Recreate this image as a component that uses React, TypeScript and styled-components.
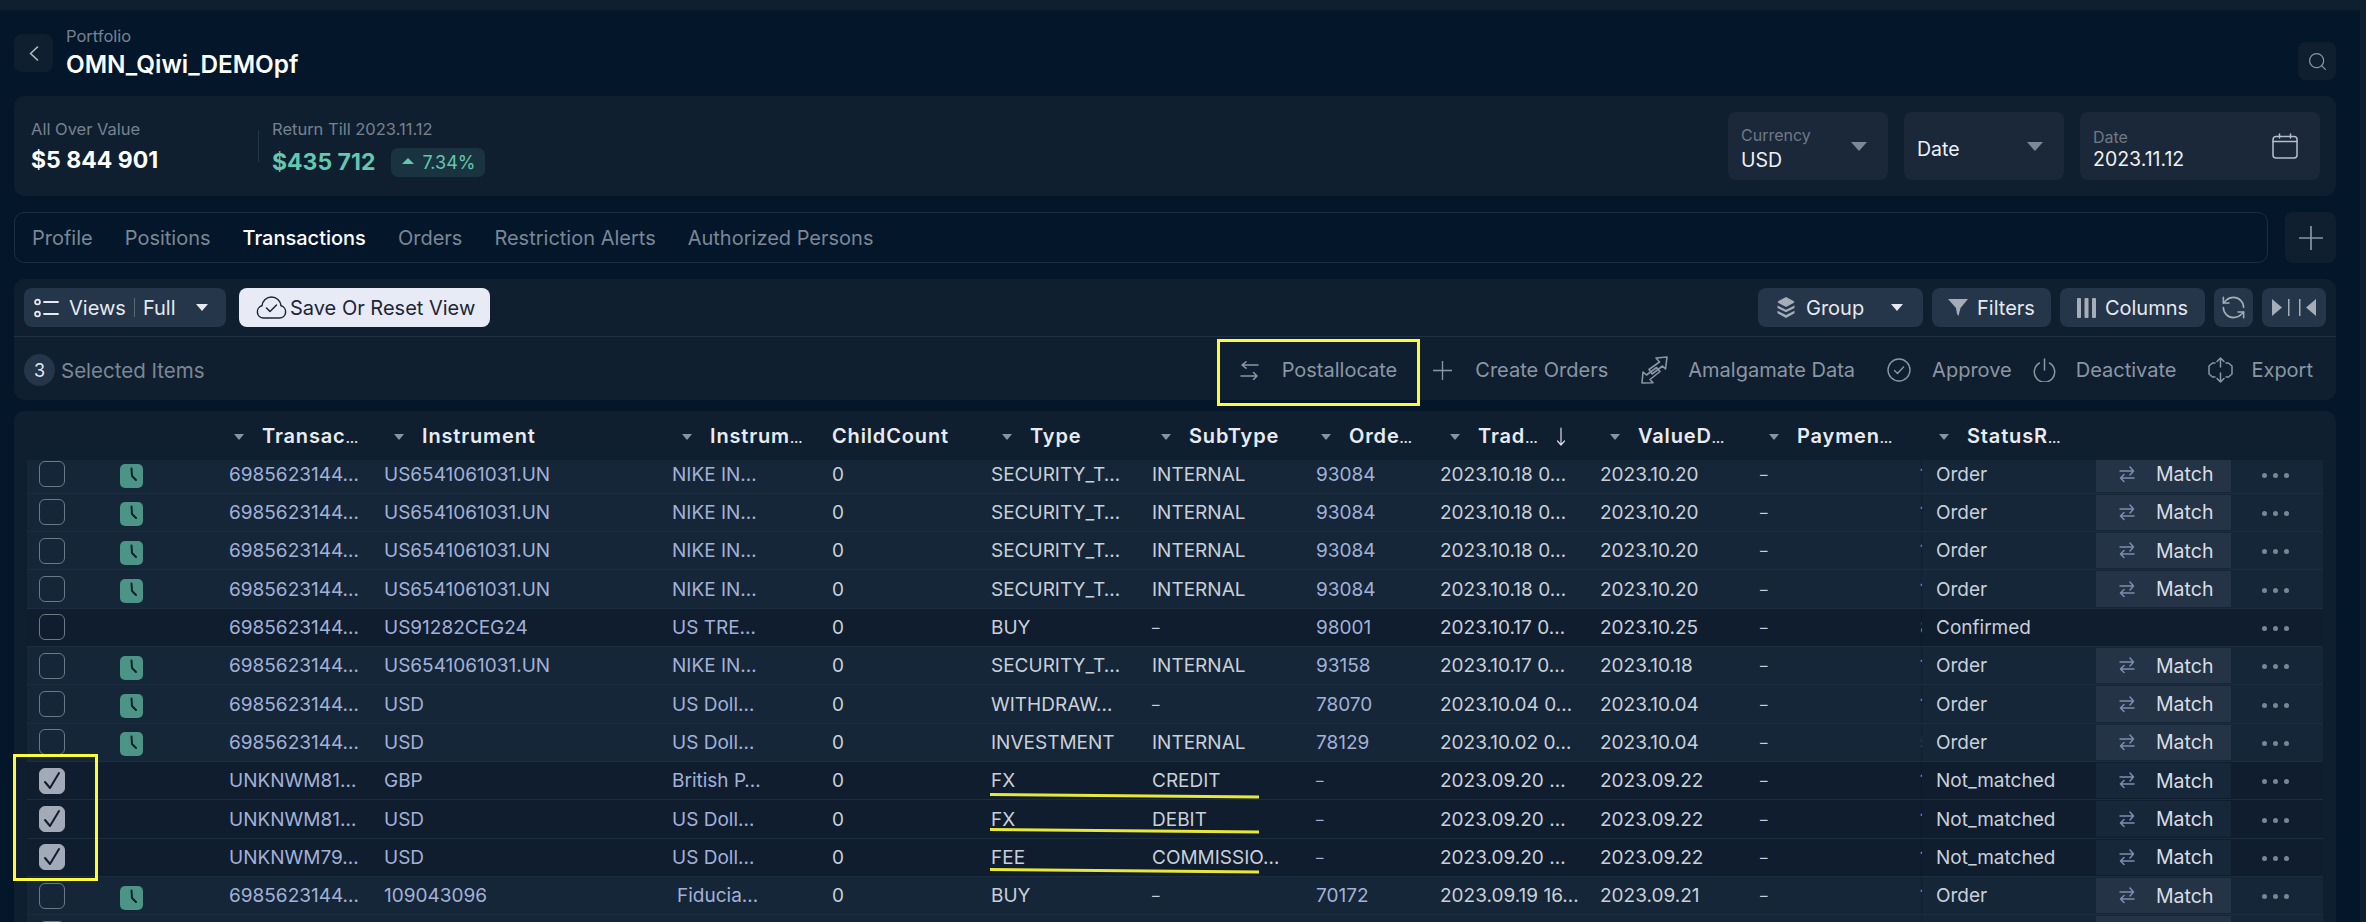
import React from 'react';
import styled, { createGlobalStyle } from 'styled-components';
import { RefreshCcw, Search } from 'lucide-react';

const Global = createGlobalStyle`
  html, body { margin: 0; padding: 0; background: #101f30; }
  body { font-family: Inter, "Noto Sans", sans-serif; overflow: hidden; }
  * { box-sizing: border-box; }
`;

const Page = styled.div`
  position: relative;
  width: 2366px;
  height: 922px;
  display: flex;
  overflow: hidden;
  background: #101f30;
`;
const Main = styled.div`
  width: 2360px;
  display: flex;
  flex-direction: column;
  background: #03162a;
`;
const TopBar = styled.div`
  height: 10px;
  flex: none;
  background: #101f30;
`;
const Content = styled.div`
  flex: 1;
  min-height: 0;
  display: flex;
  flex-direction: column;
  padding: 0 24px 0 14px;
`;
const HeaderRow = styled.header`
  height: 86px;
  flex: none;
  display: flex;
  align-items: center;
  gap: 13px;
`;
const SquareButton = styled.button<{ $w: number; $h: number }>`
  width: ${p => p.$w}px;
  height: ${p => p.$h}px;
  flex: none;
  padding: 0;
  border: 0;
  border-radius: 8px;
  background: #101f30;
  color: #8a95a3;
  display: flex;
  align-items: center;
  justify-content: center;
`;
const SearchButton = styled(SquareButton)`
  margin: 16px 0 0 auto;
`;
const TitleBlock = styled.div`
  display: flex;
  flex-direction: column;
  margin-top: -2px;
`;
const Eyebrow = styled.span`
  font-size: 16.5px;
  line-height: 20px;
  color: #76828f;
`;
const Title = styled.h1`
  margin: 4px 0 0;
  font-size: 24.3px;
  line-height: 28px;
  font-weight: 600;
  color: #fff;
`;
const SummaryCard = styled.section`
  height: 100px;
  flex: none;
  display: flex;
  align-items: center;
  padding: 0 16px 0 17px;
  border-radius: 10px;
  background: #101f30;
`;
const Stat = styled.div`
  display: flex;
  flex-direction: column;
`;
const StatLabel = styled.span`
  font-size: 16.5px;
  line-height: 20px;
  color: #76828f;
`;
const StatValue = styled.strong<{ $accent?: boolean }>`
  font-size: 23px;
  line-height: 30px;
  font-weight: 700;
  color: ${p => (p.$accent ? '#62c8af' : '#fff')};
`;
const OverValue = styled(StatValue)`
  margin-top: 6px;
`;
const StatRow = styled.div`
  display: flex;
  align-items: center;
  gap: 16px;
  margin-top: 8px;
`;
const FirstStat = styled(Stat)`
  width: 227px;
  margin-top: 2px;
`;
const StatDivider = styled.div`
  width: 1px;
  height: 32px;
  margin-right: 13px;
  background: #24364a;
`;
const ReturnStat = styled(Stat)`
  margin-top: 4px;
`;
const Badge = styled.span`
  height: 29px;
  width: 94px;
  display: flex;
  align-items: center;
  gap: 8px;
  padding-left: 11px;
  border-radius: 7px;
  background: #1a3340;
  color: #62c8af;
  font-size: 18px;
`;
const UpTri = styled.i`
  width: 0;
  height: 0;
  border-left: 6px solid transparent;
  border-right: 6px solid transparent;
  border-bottom: 6px solid #62c8af;
  margin-bottom: 3px;
`;
const Controls = styled.div`
  margin-left: auto;
  display: flex;
  gap: 16px;
`;
const Field = styled.div<{ $w: number }>`
  position: relative;
  width: ${p => p.$w}px;
  height: 68px;
  padding: 0 13px;
  border-radius: 8px;
  background: #1a2839;
  display: flex;
  align-items: center;
  justify-content: space-between;
`;
const FieldText = styled.div<{ $gap: number }>`
  display: flex;
  flex-direction: column;
  gap: ${p => p.$gap}px;
  margin-top: 6px;
`;
const FieldLabel = styled.span`
  font-size: 16px;
  line-height: 20px;
  color: #6e7a88;
`;
const FieldValue = styled.span`
  font-size: 19.5px;
  line-height: 25px;
  color: #eef1f5;
`;
const LoneValue = styled(FieldValue)`
  margin-top: 6px;
`;
const BigTri = styled.i`
  width: 0;
  height: 0;
  margin: 0 8px 0 0;
  border-left: 8px solid transparent;
  border-right: 8px solid transparent;
  border-top: 9px solid #7f8895;
`;
const CalendarSlot = styled.span`
  margin-right: 9px;
  display: flex;
`;
const TabsRow = styled.div`
  margin-top: 16px;
  flex: none;
  display: flex;
  gap: 17px;
`;
const Tabs = styled.nav`
  flex: 1;
  height: 51px;
  display: flex;
  align-items: center;
  gap: 32px;
  padding-left: 17px;
  border: 1px solid #1c2e42;
  border-radius: 10px;
`;
const Tab = styled.span<{ $active?: boolean }>`
  font-size: 20px;
  font-weight: ${p => (p.$active ? 500 : 400)};
  color: ${p => (p.$active ? '#fff' : '#7b8795')};
`;
const Toolbar = styled.section`
  margin-top: 16px;
  flex: none;
  height: 121px;
  border-radius: 10px;
  background: #101f30;
  display: flex;
  flex-direction: column;
`;
const ToolRow = styled.div`
  height: 58px;
  flex: none;
  padding: 9px 10px 9px;
  display: flex;
  gap: 9px;
  border-bottom: 1px solid #1f3044;
`;
const ToolButton = styled.button<{ $w: number; $after?: number }>`
  width: ${p => p.$w}px;
  height: 39px;
  flex: none;
  padding: 0;
  border: 0;
  border-radius: 8px;
  margin-right: ${p => p.$after ?? 0}px;
  background: #25354a;
  color: #e6eaf0;
  font: 400 20px Inter, sans-serif;
  display: flex;
  align-items: center;
  justify-content: center;
  gap: 9px;
`;
const ViewsButton = styled(ToolButton)`
  justify-content: flex-start;
  padding-left: 10px;
  gap: 8px;
`;
const SaveButton = styled(ToolButton)`
  justify-content: flex-start;
  padding-left: 17px;
  gap: 3px;
  background: #e8ebf5;
  color: #1a2636;
`;
const GroupButton = styled(ToolButton)`
  justify-content: flex-start;
  padding-left: 19px;
  gap: 11px;
`;
const ArrowGap = styled.i<{ $w: number }>`
  width: ${p => p.$w}px;
`;
const Spacer = styled.div`
  flex: 1;
`;
const SmallTri = styled.i`
  width: 0;
  height: 0;
  border-left: 6px solid transparent;
  border-right: 6px solid transparent;
  border-top: 7px solid #e6eaf0;
`;
const Pipe = styled.i`
  width: 1px;
  height: 19px;
  background: #5a6778;
`;
const SelectRow = styled.div`
  flex: 1;
  display: flex;
  align-items: center;
  padding: 3px 23px 0 10px;
`;
const CountDot = styled.span`
  width: 31px;
  height: 32px;
  border-radius: 50%;
  background: #25354a;
  color: #e6eaf0;
  font-size: 18px;
  display: flex;
  align-items: center;
  justify-content: center;
`;
const SelectedText = styled.span`
  margin-left: 6px;
  font-size: 20.5px;
  color: #7b8795;
`;
const Actions = styled.div`
  margin-left: auto;
  display: flex;
  align-items: center;
`;
const Action = styled.span<{ $gap: number; $before?: number }>`
  display: flex;
  align-items: center;
  gap: ${p => p.$gap}px;
  margin-left: ${p => p.$before ?? 0}px;
  color: #8b96a3;
  font-size: 20px;
`;
const Table = styled.section`
  margin-top: 11px;
  flex: 1;
  min-height: 0;
  display: flex;
  flex-direction: column;
  padding: 0 13px;
  border-radius: 10px 10px 0 0;
  background: #101f30;
  overflow: hidden;
`;
const HeadRow = styled.div`
  height: 49px;
  flex: none;
  padding-top: 1px;
  display: grid;
  grid-template-columns: 207px 160px 288px 150px 170px 159px 160px 129px 160px 159px 170px 1fr;
  align-items: center;
`;
const HeadCell = styled.div`
  display: flex;
  align-items: center;
  gap: 18px;
  font-size: 20px;
  font-weight: 600;
  letter-spacing: 0.85px;
  color: #e8ecf2;
  white-space: nowrap;
`;
const Ell = styled.span`
  font-size: 13px;
  letter-spacing: 0;
`;
const FilterTri = styled.i`
  width: 0;
  height: 0;
  margin-top: 2px;
  border-left: 5px solid transparent;
  border-right: 5px solid transparent;
  border-top: 6px solid #8a93a0;
`;
const Body = styled.div`
  flex: 1;
  min-height: 0;
  overflow: hidden;
`;
const Rows = styled.div`
  margin-top: -4.500px;
`;
const Row = styled.div<{ $dark?: boolean }>`
  height: 38.33px;
  display: grid;
  grid-template-columns: 93px 109px 155px 288px 160px 159px 161px 164px 124px 160px 160px 162px 174px 135px 92px;
  align-items: center;
  background: ${p => (p.$dark ? '#0f1d2e' : '#152638')};
  border-bottom: 1.5px solid #1c2d40;
  font-size: 19px;
  color: #c9d0da;
  white-space: nowrap;
`;
const CheckCell = styled.div`
  padding-left: 12px;
  display: flex;
`;
const CheckBox = styled.span<{ $on?: boolean }>`
  width: 26px;
  height: 26px;
  border-radius: 6px;
  border: 1.5px solid ${p => (p.$on ? '#a2a9b7' : '#6d7886')};
  background: ${p => (p.$on ? '#a2a9b7' : 'transparent')};
  display: flex;
  align-items: center;
  justify-content: center;
`;
const ClockBadge = styled.span`
  width: 23px;
  height: 24px;
  margin-top: 4px;
  border-radius: 5px;
  background: #4c9486;
  display: flex;
  align-items: center;
  justify-content: center;
`;
const Cell = styled.span<{ $link?: boolean; $indent?: boolean; $dash?: boolean }>`
  color: ${p => (p.$link ? '#a3b1d8' : '#c9d0da')};
  padding-left: ${p => (p.$indent ? 5 : 0)}px;
  font-size: ${p => (p.$dash ? 15 : 19)}px;
`;
const PayCell = styled.div`
  display: flex;
  justify-content: space-between;
  align-items: center;
`;
const Peek = styled.span`
  width: 2px;
  overflow: hidden;
`;
const StatusCell = styled.span`
  align-self: stretch;
  display: flex;
  align-items: center;
  padding-left: 14px;
  box-shadow: -1px 0 0 rgba(3, 22, 42, 0.35);
`;
const MatchCell = styled.div<{ $dark?: boolean }>`
  height: calc(100% - 2px);
  display: flex;
  align-items: center;
  padding-left: 23px;
  gap: 21px;
  font-size: 19.5px;
  background: ${p => (p.$dark ? '#17273a' : '#243345')};
  color: #d8dde4;
`;
const Dots = styled.div`
  display: flex;
  justify-content: center;
  gap: 6px;
  margin-top: 2px;
  padding-right: 4px;
`;
const Dot = styled.i`
  width: 5px;
  height: 5px;
  border-radius: 50%;
  background: #7a8696;
`;
const Yellow = styled.div<{ $l: number; $t: number; $w: number; $h: number }>`
  position: absolute;
  left: ${p => p.$l}px;
  top: ${p => p.$t}px;
  width: ${p => p.$w}px;
  height: ${p => p.$h}px;
  border: 3px solid #fbfb3c;
  pointer-events: none;
`;
const Ink = styled.svg`
  position: absolute;
  left: 0;
  top: 0;
  pointer-events: none;
`;

type Data = {
  id: string; ins: string; name: string; type: string; sub: string; order: string;
  trade: string; value: string; peek: string; status: string;
  clock?: boolean; on?: boolean; dark?: boolean; indent?: boolean; match?: boolean;
};
const ID = '6985623144…';
const nike = (peek: string): Data => ({
  id: ID, ins: 'US6541061031.UN', name: 'NIKE IN…', type: 'SECURITY_T…', sub: 'INTERNAL', order: '93084',
  trade: '2023.10.18 0…', value: '2023.10.20', peek, status: 'Order', clock: true, match: true,
});
const rows: Data[] = [
  nike('1'), nike('1'), nike('1'), nike('1'),
  { id: ID, ins: 'US91282CEG24', name: 'US TRE…', type: 'BUY', sub: '–', order: '98001', trade: '2023.10.17 0…', value: '2023.10.25', peek: '8', status: 'Confirmed', dark: true },
  { id: ID, ins: 'US6541061031.UN', name: 'NIKE IN…', type: 'SECURITY_T…', sub: 'INTERNAL', order: '93158', trade: '2023.10.17 0…', value: '2023.10.18', peek: '1', status: 'Order', clock: true, match: true },
  { id: ID, ins: 'USD', name: 'US Doll…', type: 'WITHDRAW…', sub: '–', order: '78070', trade: '2023.10.04 0…', value: '2023.10.04', peek: '1', status: 'Order', clock: true, match: true },
  { id: ID, ins: 'USD', name: 'US Doll…', type: 'INVESTMENT', sub: 'INTERNAL', order: '78129', trade: '2023.10.02 0…', value: '2023.10.04', peek: '5', status: 'Order', clock: true, match: true },
  { id: 'UNKNWM81…', ins: 'GBP', name: 'British P…', type: 'FX', sub: 'CREDIT', order: '–', trade: '2023.09.20 …', value: '2023.09.22', peek: '1', status: 'Not_matched', on: true, dark: true, match: true },
  { id: 'UNKNWM81…', ins: 'USD', name: 'US Doll…', type: 'FX', sub: 'DEBIT', order: '–', trade: '2023.09.20 …', value: '2023.09.22', peek: '1', status: 'Not_matched', on: true, dark: true, match: true },
  { id: 'UNKNWM79…', ins: 'USD', name: 'US Doll…', type: 'FEE', sub: 'COMMISSIO…', order: '–', trade: '2023.09.20 …', value: '2023.09.22', peek: '1', status: 'Not_matched', on: true, dark: true, match: true },
  { id: ID, ins: '109043096', name: 'Fiducia…', type: 'BUY', sub: '–', order: '70172', trade: '2023.09.19 16…', value: '2023.09.21', peek: '1', status: 'Order', clock: true, match: true, indent: true },
  { id: ID, ins: '109043096', name: 'Fiducia…', type: 'BUY', sub: '–', order: '70171', trade: '2023.09.19 16…', value: '2023.09.21', peek: '1', status: 'Order', clock: true, match: true, indent: true },
];

const Line = { fill: 'none', stroke: 'currentColor', strokeLinecap: 'round', strokeLinejoin: 'round' } as const;

const ViewsIcon = () => (
  <svg width="27" height="20" viewBox="0 0 27 20" {...Line} strokeWidth="1.8">
    <circle cx="3.5" cy="4" r="2.4" /><path d="M10 4h14" />
    <circle cx="3.5" cy="16" r="2.4" /><path d="M10 16h14" />
  </svg>
);
const CloudIcon = () => (
  <svg width="31" height="23" viewBox="0 0 31 23" {...Line} strokeWidth="1.5">
    <path d="M7.5 22a6.2 6.2 0 0 1-1.5-12.2A9.6 9.6 0 0 1 15.500 1a9.6 9.6 0 0 1 9.500 8.800A6.2 6.2 0 0 1 23.500 22Z" />
    <path d="M10.500 12l3.500 3.500 6.500-6.500" />
  </svg>
);
const LayersIcon = () => (
  <svg width="18" height="21" viewBox="0 0 18 21" fill="#a5adb8">
    <path d="M9 0l7.500 4c1 .6 1 1.400 0 2L9 10 1.500 6c-1-.6-1-1.400 0-2Z" />
    <path d="M0.500 8.500L9 12.800l8.500-4.300V11L9 15.300.5 11Z" />
    <path d="M0.500 13.800L9 18l8.500-4.200v2.500L9 21 .5 16.300Z" />
  </svg>
);
const FilterIcon = () => (
  <svg width="20" height="17" viewBox="0 0 20 17" fill="#a5adb8">
    <path d="M0 0h20l-7.500 9-2 8-1.500-2-1-6Z" />
  </svg>
);
const ColumnsIcon = () => (
  <svg width="19" height="20" viewBox="0 0 19 20" fill="#a5adb8">
    <rect width="4" height="20" rx="1" /><rect x="7.500" width="4" height="20" rx="1" /><rect x="15" width="4" height="20" rx="1" />
  </svg>
);
const SplitIcon = () => (
  <svg width="44" height="17" viewBox="0 0 44 17" fill="#a5adb8">
    <path d="M0 0l10 8.500L0 17Z" /><rect x="16" y="0" width="1.500" height="17" /><rect x="27" y="0" width="1.500" height="17" /><path d="M44 0L34 8.500 44 17Z" />
  </svg>
);
const CalendarIcon = () => (
  <svg width="26" height="26" viewBox="0 0 26 26" {...Line} stroke="#b6bec9" strokeWidth="1.500">
    <rect x="1" y="3.500" width="24" height="21.500" rx="3" /><path d="M1 8.500h24M7.500 1v4M18.500 1v4" />
  </svg>
);
const PostIcon = () => (
  <svg width="19" height="19" viewBox="0 0 19 19" {...Line} strokeWidth="1.5">
    <path d="M18 4H2M6 .8 2 4l4 3.200M1 15h16M13.500 11.500 17 15l-3.500 3.500" />
  </svg>
);
const PlusIcon = ({ s = 19 }: { s?: number }) => (
  <svg width={s} height={s} viewBox="0 0 24 24" {...Line} strokeWidth="1.700"><path d="M12 0v24M0 12h24" /></svg>
);
const AmalgamIcon = () => (
  <svg width="27" height="30" viewBox="0 0 27 30" {...Line} strokeWidth="1.600">
    <path d="M26 2l-11 1 3.500 4L8 14.500l3.200 4.500L21.500 11l3 3Z" />
    <path d="M1 28l1-11 3.500 3 10-7.500 3.500 4L9 24.500l3 3.200Z" />
  </svg>
);
const ApproveIcon = () => (
  <svg width="24" height="24" viewBox="0 0 24 24" {...Line} strokeWidth="1.400">
    <circle cx="12" cy="12" r="11" /><path d="M7.500 12.500l3 3 6-6.500" />
  </svg>
);
const PowerIcon = () => (
  <svg width="23" height="24" viewBox="0 0 23 24" {...Line} strokeWidth="1.500">
    <path d="M6.500 5a10.200 10.200 0 1 0 10 0M11.500 1v11" />
  </svg>
);
const ExportIcon = () => (
  <svg width="25" height="26" viewBox="0 0 25 26" {...Line} strokeWidth="1.500">
    <path d="M7 6H4.500L1 9v8l3.500 3H7M18 6h2.500L24 9v8l-3.500 3H18" />
    <path d="M12.500 10V1M9 4.500 12.500 1 16 4.500M12.500 16v9M9 21.500 12.500 25l3.500-3.500" />
  </svg>
);
const SortArrow = () => (
  <svg width="10" height="19" viewBox="0 0 10 19" {...Line} strokeWidth="1.200" stroke="#d5dae2"><path d="M5 1v17M1.500 14 5 18l3.500-4" /></svg>
);
const ClockIcon = () => (
  <svg width="23" height="24" viewBox="0 0 23 24" {...Line} stroke="#10202f" strokeWidth="2"><path d="M11.500 4.500l.5 7.500 4 4" /></svg>
);
const CheckIcon = () => (
  <svg width="18" height="20" viewBox="0 0 18 20" {...Line} stroke="#0f1d2e" strokeWidth="2"><path d="M2 11l5 6L16 2" /></svg>
);
const MatchIcon = () => (
  <svg width="16" height="17" viewBox="0 0 16 17" {...Line} stroke="#7d8db0" strokeWidth="1.500">
    <path d="M1 5h13.500M11 1l3.500 4L11 9M15 12H1.500M5 8.500 1.500 12 5 15.500" />
  </svg>
);
const BackIcon = () => (
  <svg width="10" height="15" viewBox="0 0 10 15" {...Line} stroke="#b3bcc7" strokeWidth="1.600"><path d="M8.500 1 1.500 7.500l7 6.500" /></svg>
);

const heads: { label: string; more?: boolean; tri?: boolean; sort?: boolean }[] = [
  { label: 'Transac', more: true, tri: true }, { label: 'Instrument', tri: true }, { label: 'Instrum', more: true, tri: true },
  { label: 'ChildCount' }, { label: 'Type', tri: true }, { label: 'SubType', tri: true }, { label: 'Orde', more: true, tri: true },
  { label: 'Trad', more: true, tri: true, sort: true }, { label: 'ValueD', more: true, tri: true }, { label: 'Paymen', more: true, tri: true }, { label: 'StatusR', more: true, tri: true },
];
const tabs = ['Profile', 'Positions', 'Transactions', 'Orders', 'Restriction Alerts', 'Authorized Persons'];

export default function App() {
  return (
    <Page>
      <Global />
      <Main>
        <TopBar />
        <Content>
          <HeaderRow>
            <SquareButton $w={39} $h={38}><BackIcon /></SquareButton>
            <TitleBlock>
              <Eyebrow>Portfolio</Eyebrow>
              <Title>OMN_Qiwi_DEMOpf</Title>
            </TitleBlock>
            <SearchButton $w={38} $h={38}><Search size={21} strokeWidth={1.4} /></SearchButton>
          </HeaderRow>

          <SummaryCard>
            <FirstStat>
              <StatLabel>All Over Value</StatLabel>
              <OverValue>$5 844 901</OverValue>
            </FirstStat>
            <StatDivider />
            <ReturnStat>
              <StatLabel>Return Till 2023.11.12</StatLabel>
              <StatRow>
                <StatValue $accent>$435 712</StatValue>
                <Badge><UpTri />7.34%</Badge>
              </StatRow>
            </ReturnStat>
            <Controls>
              <Field $w={160}>
                <FieldText $gap={3}><FieldLabel>Currency</FieldLabel><FieldValue>USD</FieldValue></FieldText>
                <BigTri />
              </Field>
              <Field $w={160}>
                <LoneValue>Date</LoneValue>
                <BigTri />
              </Field>
              <Field $w={240}>
                <FieldText $gap={0}><FieldLabel>Date</FieldLabel><FieldValue>2023.11.12</FieldValue></FieldText>
                <CalendarSlot><CalendarIcon /></CalendarSlot>
              </Field>
            </Controls>
          </SummaryCard>

          <TabsRow>
            <Tabs>{tabs.map(t => <Tab key={t} $active={t === 'Transactions'}>{t}</Tab>)}</Tabs>
            <SquareButton $w={51} $h={51}><PlusIcon s={24} /></SquareButton>
          </TabsRow>

          <Toolbar>
            <ToolRow>
              <ViewsButton $w={202} $after={4}><ViewsIcon />Views<Pipe />Full<ArrowGap $w={4} /><SmallTri /></ViewsButton>
              <SaveButton $w={251}><CloudIcon />Save Or Reset View</SaveButton>
              <Spacer />
              <GroupButton $w={165}><LayersIcon />Group<ArrowGap $w={5} /><SmallTri /></GroupButton>
              <ToolButton $w={119}><FilterIcon />Filters</ToolButton>
              <ToolButton $w={145}><ColumnsIcon />Columns</ToolButton>
              <ToolButton $w={39}><RefreshCcw size={27} strokeWidth={1.4} color="#a5adb8" /></ToolButton>
              <ToolButton $w={64}><SplitIcon /></ToolButton>
            </ToolRow>
            <SelectRow>
              <CountDot>3</CountDot>
              <SelectedText>Selected Items</SelectedText>
              <Actions>
                <Action $gap={23}><PostIcon />Postallocate</Action>
                <Action $gap={23} $before={36}><PlusIcon />Create Orders</Action>
                <Action $gap={20} $before={33}><AmalgamIcon />Amalgamate Data</Action>
                <Action $gap={21} $before={32}><ApproveIcon />Approve</Action>
                <Action $gap={20} $before={21}><PowerIcon />Deactivate</Action>
                <Action $gap={18} $before={32}><ExportIcon />Export</Action>
              </Actions>
            </SelectRow>
          </Toolbar>

          <Table>
            <HeadRow>
              <span />
              {heads.map(h => (
                <HeadCell key={h.label}>
                  {h.tri && <FilterTri />}
                  <span>{h.label}{h.more && <Ell>…</Ell>}</span>
                  {h.sort && <SortArrow />}
                </HeadCell>
              ))}
            </HeadRow>
            <Body>
              <Rows>
                {rows.map((r, i) => (
                  <Row key={i} $dark={r.dark}>
                    <CheckCell><CheckBox $on={r.on}>{r.on && <CheckIcon />}</CheckBox></CheckCell>
                    <div>{r.clock && <ClockBadge><ClockIcon /></ClockBadge>}</div>
                    <Cell $link>{r.id}</Cell>
                    <Cell $link>{r.ins}</Cell>
                    <Cell $link $indent={r.indent}>{r.name}</Cell>
                    <Cell>0</Cell>
                    <Cell>{r.type}</Cell>
                    <Cell $dash={r.sub === '–'}>{r.sub}</Cell>
                    <Cell $link $dash={r.order === '–'}>{r.order}</Cell>
                    <Cell>{r.trade}</Cell>
                    <Cell>{r.value}</Cell>
                    <PayCell><Cell $dash>–</Cell><Peek>{r.peek}</Peek></PayCell>
                    <StatusCell>{r.status}</StatusCell>
                    {r.match ? <MatchCell $dark={r.dark}><MatchIcon />Match</MatchCell> : <span />}
                    <Dots><Dot /><Dot /><Dot /></Dots>
                  </Row>
                ))}
              </Rows>
            </Body>
          </Table>
        </Content>
      </Main>

      <Yellow $l={1217} $t={339} $w={203} $h={67} />
      <Yellow $l={13} $t={754} $w={85} $h={127} />
      <Ink width="2366" height="922" viewBox="0 0 2366 922" fill="none" stroke="#e8e83a" strokeWidth="3">
        <path d="M990 794.500 1259 797" />
        <path d="M990 829.500 1259 832" />
        <path d="M990 869.500 1259 872" />
      </Ink>
    </Page>
  );
}
